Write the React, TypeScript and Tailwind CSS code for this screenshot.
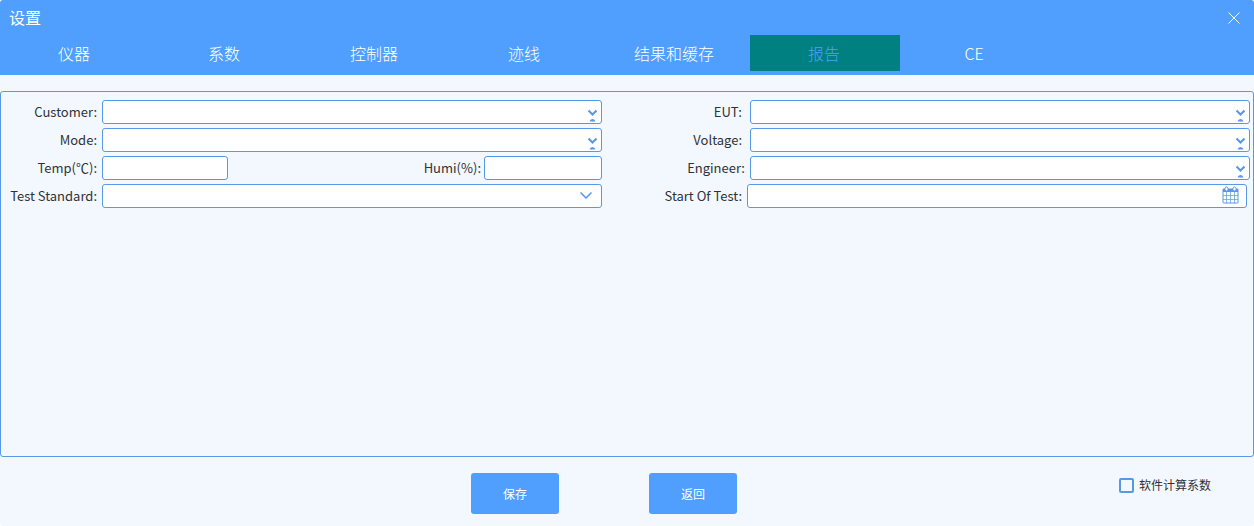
import { useState, type ReactNode } from "react";

const tabs = ["仪器", "系数", "控制器", "迹线", "结果和缓存", "报告", "CE"];

const control =
  "block h-6 w-full appearance-none rounded-[3px] border border-[#5799e6] bg-white px-2 text-[13px] text-[#333] outline-none";

function Label({ id, children }: { id: string; children: ReactNode }) {
  return (
    <label htmlFor={id} className="whitespace-nowrap text-right text-[13px] leading-6 text-[#2f3237]">
      {children}
    </label>
  );
}

function ComboBox({ id }: { id: string }) {
  return (
    <div className="relative">
      <select id={id} className={control}>
        <option value="" />
      </select>
      <svg
        className="pointer-events-none absolute right-1 bottom-px h-[14px] w-[11px]"
        viewBox="0 0 11 14"
        fill="none"
        aria-hidden="true"
      >
        <path d="M1.5 1.5 5.5 5.5 9.5 1.5" stroke="#5797e6" strokeWidth="2" />
        <path d="M2.5 12.5Q3 10 5.5 10T8.5 12.5Z" fill="#5797e6" />
      </svg>
    </div>
  );
}

function CalendarIcon() {
  return (
    <svg
      className="pointer-events-none absolute top-[2px] right-2 h-[18px] w-[17px]"
      viewBox="0 0 17 18"
      fill="none"
      stroke="#5797e6"
      aria-hidden="true"
    >
      <path d="M1 3h15v3H1z" fill="#5797e6" stroke="none" />
      <rect x="1" y="3" width="15" height="14" rx="0.5" />
      <path d="M4.5 6v11M8.5 6v11M12.5 6v11M1 9.5h15M1 13.5h15" strokeOpacity="0.7" />
      <rect x="3" y="1" width="3" height="4" rx="1.5" fill="#fff" />
      <rect x="11" y="1" width="3" height="4" rx="1.5" fill="#fff" />
    </svg>
  );
}

export default function App() {
  const [active, setActive] = useState("报告");

  return (
    <div className="flex min-h-screen flex-col overflow-hidden rounded-[3px] bg-[#f3f8ff] font-['Noto_Sans_CJK_SC',sans-serif]">
      <header className="bg-[#509fff] pb-1 text-white">
        <div className="flex h-[35px] items-center justify-between pr-3 pl-[9px]">
          <h1 className="pb-0.5 text-base leading-6">设置</h1>
          <button type="button" aria-label="关闭" className="flex h-4 w-4 items-center justify-center">
            <svg className="h-3 w-3" viewBox="0 0 12 12" stroke="currentColor" fill="none" aria-hidden="true">
              <path d="M.5.5l11 11M11.5.5l-11 11" />
            </svg>
          </button>
        </div>
        <nav className="flex">
          {tabs.map((tab) => (
            <button
              key={tab}
              type="button"
              onClick={() => setActive(tab)}
              className={
                "h-9 w-[150px] pr-0.5 text-base font-light " +
                (tab === active ? "bg-[#008080] text-[#509fff]" : "text-white")
              }
            >
              {tab}
            </button>
          ))}
        </nav>
      </header>

      <main className="mt-4 flex-1 rounded-[3px] border border-[#5799e6] pt-2 pr-[3px]">
        <form id="report" className="grid grid-cols-[101px_minmax(0,1fr)_148px_minmax(0,1fr)] gap-y-1">
          <div className="grid pr-[5px]"><Label id="customer">Customer:</Label></div>
          <ComboBox id="customer" />
          <div className="grid pr-2"><Label id="eut">EUT:</Label></div>
          <ComboBox id="eut" />

          <div className="grid pr-[5px]"><Label id="mode">Mode:</Label></div>
          <ComboBox id="mode" />
          <div className="grid pr-2"><Label id="voltage">Voltage:</Label></div>
          <ComboBox id="voltage" />

          <div className="grid pr-[5px]"><Label id="temp">Temp(℃):</Label></div>
          <div className="flex justify-between">
            <div className="w-[126px]">
              <input id="temp" type="text" className={control} />
            </div>
            <div className="flex gap-[3px]">
              <Label id="humi">Humi(%):</Label>
              <div className="w-[118px]">
                <input id="humi" type="text" className={control} />
              </div>
            </div>
          </div>
          <div className="grid pr-[5px]"><Label id="engineer">Engineer:</Label></div>
          <ComboBox id="engineer" />

          <div className="grid pr-[5px]"><Label id="standard">Test Standard:</Label></div>
          <div className="relative">
            <select id="standard" className={control}>
              <option value="" />
            </select>
            <svg
              className="pointer-events-none absolute top-2 right-[10px] h-[7px] w-3"
              viewBox="0 0 12 7"
              fill="none"
              aria-hidden="true"
            >
              <path d="M.5.5 6 6 11.5.5" stroke="#5797e6" strokeWidth="1.5" />
            </svg>
          </div>
          <div className="grid pr-2"><Label id="start">Start Of Test:</Label></div>
          <div className="relative -ml-[3px] mr-[3px]">
            <input id="start" type="text" className={control} />
            <CalendarIcon />
          </div>
        </form>
      </main>

      <footer className="flex items-start pt-4 pr-[43px] pb-3">
        <div className="flex-1" />
        <div className="mr-[3px] flex gap-[90px]">
          <button type="submit" form="report" className="h-[41px] w-[88px] rounded-[3px] bg-[#509fff] text-xs text-white">
            保存
          </button>
          <button type="button" className="h-[41px] w-[88px] rounded-[3px] bg-[#509fff] text-xs text-white">
            返回
          </button>
        </div>
        <div className="flex flex-1 justify-end">
          <label className="flex h-6 items-center gap-[5px] text-xs text-[#2f3237]">
            <input
              type="checkbox"
              className="h-[15px] w-[15px] appearance-none rounded-[2px] border-2 border-[#5799e6] checked:bg-[#5799e6]"
            />
            软件计算系数
          </label>
        </div>
      </footer>
    </div>
  );
}
